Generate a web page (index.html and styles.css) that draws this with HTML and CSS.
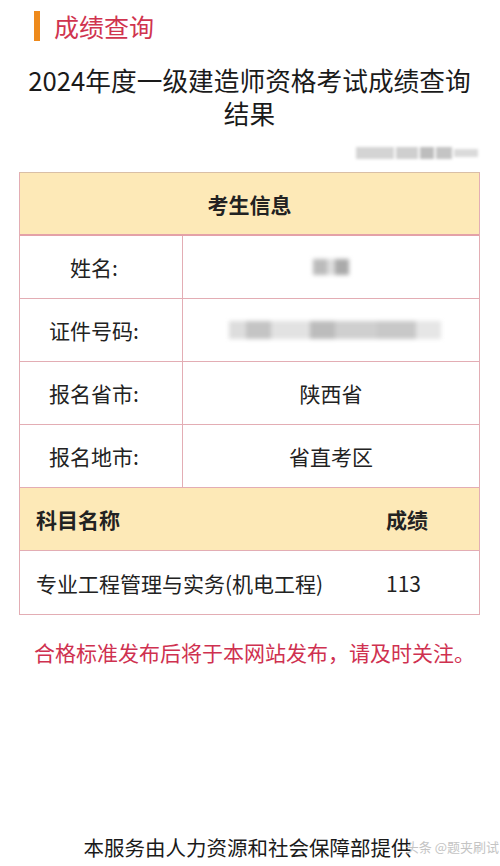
FILE: index.html
```html
<!DOCTYPE html>
<html lang="zh">
<head>
<meta charset="utf-8">
<link rel="stylesheet" href="styles.css">
</head>
<body>
<div class="page">
  <div class="head">
    <span class="bar"></span>
    <span class="head-title">成绩查询</span>
  </div>
  <h1 class="title">2024年度一级建造师资格考试成绩查询<br>结果</h1>
  <div class="meta-row">
    <div class="blur-box">
      <span class="b b1"></span><span class="b b2"></span><span class="b b3"></span><span class="b b4"></span><span class="b b5"></span>
    </div>
  </div>
  <div class="card">
    <div class="hrow center">考生信息</div>
    <div class="row"><div class="lab">姓名:</div><div class="val"><span class="blur-name"></span></div></div>
    <div class="row"><div class="lab">证件号码:</div><div class="val"><span class="blur-id"></span></div></div>
    <div class="row"><div class="lab">报名省市:</div><div class="val">陕西省</div></div>
    <div class="row"><div class="lab">报名地市:</div><div class="val">省直考区</div></div>
    <div class="hrow srow"><span class="s-name">科目名称</span><span class="s-score">成绩</span></div>
    <div class="srow last"><span class="s-name">专业工程管理与实务(机电工程)</span><span class="s-score">113</span></div>
  </div>
  <p class="notice">合格标准发布后将于本网站发布，请及时关注。</p>
  <div class="footer">
    <span>本服务由人力资源和社会保障部提供</span>
    <span class="wm">头条 @题夹刷试</span>
  </div>
</div>
</body>
</html>
```
FILE: styles.css
```css
* { box-sizing: border-box; }
html, body { margin: 0; padding: 0; background: #fff; }
body {
  font-family: "Noto Sans CJK SC", "Noto Sans", sans-serif;
  color: #222;
  width: 500px;
  height: 866px;
  overflow: hidden;
}
.page { padding: 0 20px 0 19px; }
.head {
  display: flex;
  align-items: center;
  height: 36px;
  margin-top: 8px;
  padding-left: 15px;
}
.bar {
  width: 6px;
  height: 30px;
  background: #ee8a1c;
  margin-right: 14px;
}
.head-title {
  font-size: 25px;
  color: #d0344f;
  line-height: 36px;
}
.title {
  margin: 19px -19px 0 -19px;
  font-size: 25.7px;
  font-weight: 400;
  line-height: 33px;
  text-align: center;
  color: #1a1a1a;
}
.meta-row {
  display: flex;
  justify-content: flex-end;
  margin-top: 14px;
  height: 22px;
  margin-right: 2px;
}
.blur-box {
  display: flex;
  align-items: center;
  gap: 2px;
  width: 122px;
  height: 16px;
  margin-top: 2px;
  filter: blur(1.5px);
}
.b { display: block; height: 12px; background: #c8c8c8; }
.b1 { width: 38px; background: #d4d4d4; }
.b2 { width: 22px; background: #cfcfcf; }
.b3 { width: 14px; background: #bdbdbd; }
.b4 { width: 16px; background: #c4c4c4; }
.b5 { width: 24px; background: #dadada; height: 8px; }
.card {
  width: 461px;
  margin-top: 7px;
  border: 1px solid #e3adb4;
  border-top-color: #d9bfa6;
  font-size: 21px;
}
.hrow {
  height: 63px;
  background: #fde9b7;
  font-weight: 700;
  border-bottom: 2px solid #e4a1a8;
  display: flex;
  align-items: center;
}
.hrow.center { justify-content: center; }
.row {
  display: grid;
  grid-template-columns: 163px 1fr;
  height: 63px;
  border-bottom: 1px solid #e3adb4;
}
.lab, .val {
  display: flex;
  align-items: center;
  justify-content: center;
}
.lab { border-right: 1px solid #e3adb4; padding-right: 14px; }
.srow {
  display: grid;
  grid-template-columns: 350px 1fr;
  align-items: center;
  height: 63px;
}
.hrow.srow { border-bottom: 1px solid #e3adb4; }
.s-name { padding-left: 16px; white-space: nowrap; }
.s-score { padding-left: 16px; white-space: nowrap; }
.blur-name {
  display: inline-block;
  width: 36px;
  height: 16px;
  background: linear-gradient(90deg, #bbb 0 40%, #ddd 40% 60%, #aaa 60%);
  filter: blur(2px);
}
.blur-id {
  display: inline-block;
  width: 212px;
  height: 18px;
  margin-left: 8px;
  background: linear-gradient(90deg, #ddd 0 8%, #c4c4c4 8% 20%, #e2e2e2 20% 38%, #bcbcbc 38% 50%, #cfcfcf 50% 70%, #c8c8c8 70% 88%, #e6e6e6 88%);
  filter: blur(2px);
}
.notice {
  margin: 22px 0 0;
  padding-left: 15px;
  font-size: 21px;
  line-height: 30px;
  color: #cf3150;
  white-space: nowrap;
}
.footer {
  margin-top: 165px;
  display: flex;
  justify-content: center;
  font-size: 20.5px;
  line-height: 30px;
  color: #1a1a1a;
  position: relative;
  padding-right: 4px;
}
.wm {
  position: absolute;
  right: -19px;
  top: 6px;
  font-size: 13px;
  line-height: 18px;
  color: #c4c4c4;
  white-space: nowrap;
}
```
